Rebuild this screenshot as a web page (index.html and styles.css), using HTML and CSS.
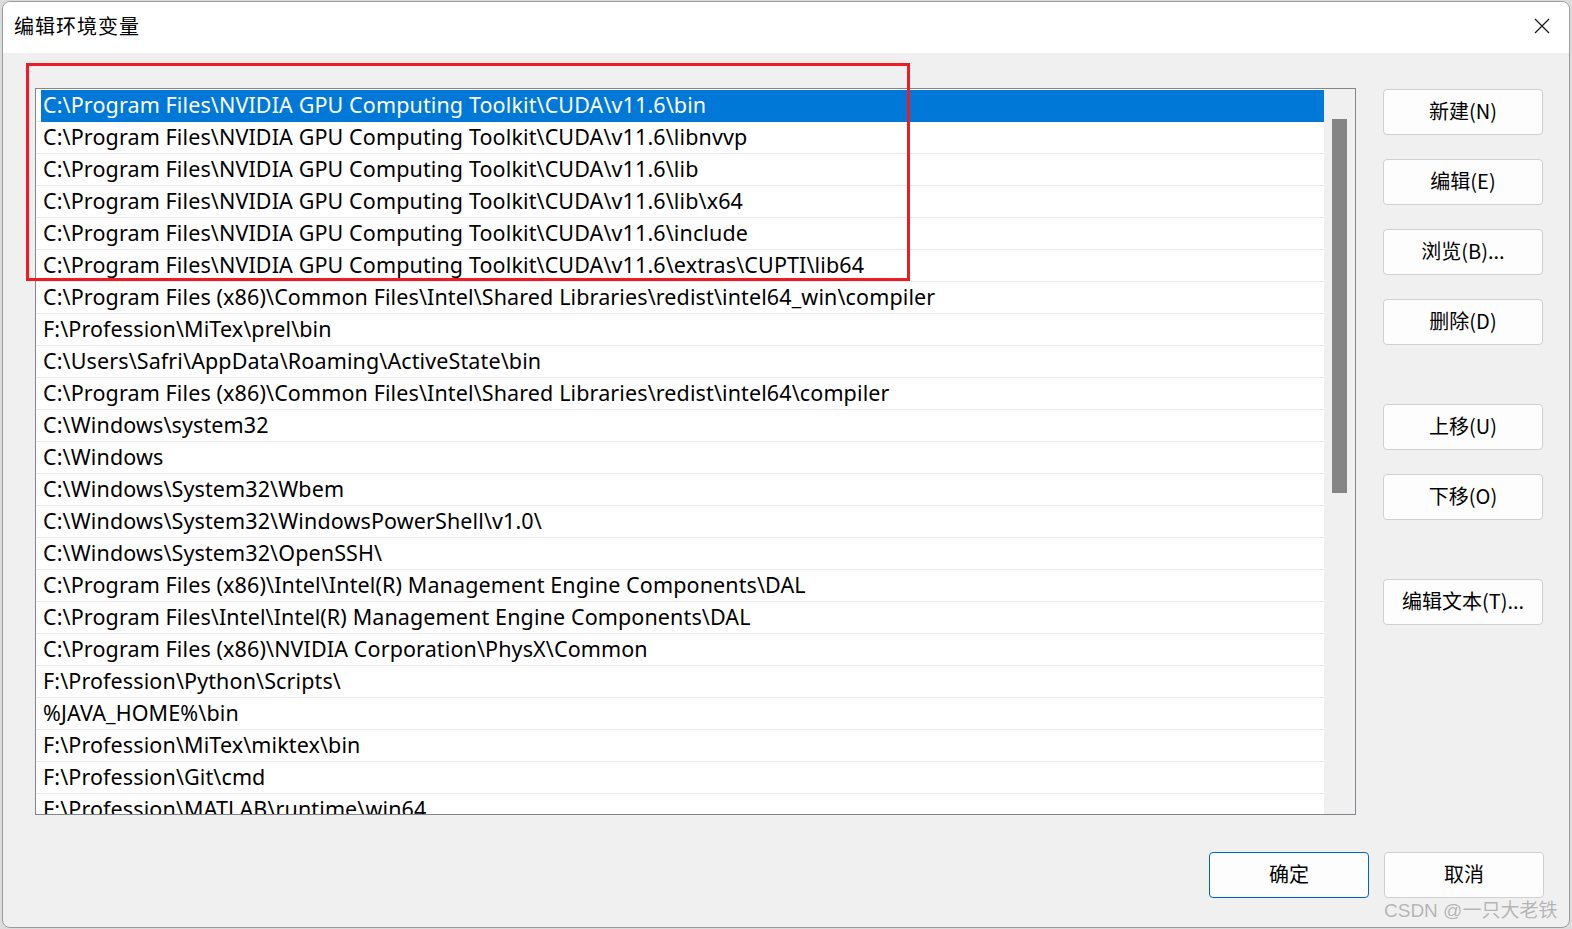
FILE: index.html
```html
<!DOCTYPE html>
<html lang="zh-CN">
<head>
<meta charset="utf-8">
<title>编辑环境变量</title>
<link rel="stylesheet" href="styles.css">
</head>
<body>
<div class="dialog">
  <div class="titlebar">
    <span class="title">编辑环境变量</span>
    <svg class="close" width="16" height="16" viewBox="0 0 16 16"><path d="M1 1 L15 15 M15 1 L1 15" stroke="#1a1a1a" stroke-width="1.3" fill="none"/></svg>
  </div>
  <div class="content">
    <div class="main">
      <div class="listbox">
        <div class="rows">
          <div class="row sel"><span class="cell">C:\Program Files\NVIDIA GPU Computing Toolkit\CUDA\v11.6\bin</span></div>
          <div class="row"><span class="cell">C:\Program Files\NVIDIA GPU Computing Toolkit\CUDA\v11.6\libnvvp</span></div>
          <div class="row"><span class="cell">C:\Program Files\NVIDIA GPU Computing Toolkit\CUDA\v11.6\lib</span></div>
          <div class="row"><span class="cell">C:\Program Files\NVIDIA GPU Computing Toolkit\CUDA\v11.6\lib\x64</span></div>
          <div class="row"><span class="cell">C:\Program Files\NVIDIA GPU Computing Toolkit\CUDA\v11.6\include</span></div>
          <div class="row"><span class="cell">C:\Program Files\NVIDIA GPU Computing Toolkit\CUDA\v11.6\extras\CUPTI\lib64</span></div>
          <div class="row"><span class="cell">C:\Program Files (x86)\Common Files\Intel\Shared Libraries\redist\intel64_win\compiler</span></div>
          <div class="row"><span class="cell">F:\Profession\MiTex\prel\bin</span></div>
          <div class="row"><span class="cell">C:\Users\Safri\AppData\Roaming\ActiveState\bin</span></div>
          <div class="row"><span class="cell">C:\Program Files (x86)\Common Files\Intel\Shared Libraries\redist\intel64\compiler</span></div>
          <div class="row"><span class="cell">C:\Windows\system32</span></div>
          <div class="row"><span class="cell">C:\Windows</span></div>
          <div class="row"><span class="cell">C:\Windows\System32\Wbem</span></div>
          <div class="row"><span class="cell">C:\Windows\System32\WindowsPowerShell\v1.0\</span></div>
          <div class="row"><span class="cell">C:\Windows\System32\OpenSSH\</span></div>
          <div class="row"><span class="cell">C:\Program Files (x86)\Intel\Intel(R) Management Engine Components\DAL</span></div>
          <div class="row"><span class="cell">C:\Program Files\Intel\Intel(R) Management Engine Components\DAL</span></div>
          <div class="row"><span class="cell">C:\Program Files (x86)\NVIDIA Corporation\PhysX\Common</span></div>
          <div class="row"><span class="cell">F:\Profession\Python\Scripts\</span></div>
          <div class="row"><span class="cell">%JAVA_HOME%\bin</span></div>
          <div class="row"><span class="cell">F:\Profession\MiTex\miktex\bin</span></div>
          <div class="row"><span class="cell">F:\Profession\Git\cmd</span></div>
          <div class="row"><span class="cell">F:\Profession\MATLAB\runtime\win64</span></div>
        </div>
        <div class="scrollbar"><div class="thumb"></div></div>
      </div>
      <div class="side">
        <button class="btn">新建(N)</button>
        <button class="btn">编辑(E)</button>
        <button class="btn">浏览(B)...</button>
        <button class="btn">删除(D)</button>
        <button class="btn gap">上移(U)</button>
        <button class="btn">下移(O)</button>
        <button class="btn gap">编辑文本(T)...</button>
      </div>
    </div>
    <div class="footer">
      <button class="btn primary">确定</button>
      <button class="btn">取消</button>
    </div>
  </div>
  <div class="redbox"></div>
  <div class="watermark">CSDN @一只大老铁</div>
</div>
</body>
</html>
```
FILE: styles.css
```css
* { box-sizing: border-box; }
html, body { margin: 0; padding: 0; }
body {
  width: 1572px;
  height: 929px;
  background: #dcdcdc;
  font-family: "Noto Sans", "Noto Sans CJK SC", sans-serif;
  color: #000;
  overflow: hidden;
}
.dialog {
  position: relative;
  margin: 1px 2px 0 2px;
  width: 1568px;
  height: 927px;
  border: 1px solid #9c9c9c;
  border-radius: 8px;
  background: #f0f0f0;
  overflow: hidden;
  display: flex;
  flex-direction: column;
}
.titlebar {
  height: 51px;
  background: #ffffff;
  display: flex;
  align-items: center;
  justify-content: space-between;
  padding: 0 19px 4px 11px;
  flex: none;
}
.title {
  font-family: "Noto Sans CJK SC", sans-serif;
  font-size: 20px;
  letter-spacing: 1px;
}
.close { display: block; }
.content {
  flex: 1;
  display: flex;
  flex-direction: column;
}
.main {
  display: flex;
  gap: 27px;
  padding: 35px 0 0 32px;
}
.listbox {
  width: 1321px;
  height: 727px;
  border: 1px solid #83868c;
  background: #ffffff;
  display: flex;
  overflow: hidden;
}
.rows {
  width: 1288px;
  padding-top: 1px;
  overflow: hidden;
}
.row {
  height: 32px;
  border-bottom: 1px solid #ebebeb;
  display: flex;
}
.cell {
  margin-left: 5px;
  padding-left: 2px;
  flex: 1;
  font-size: 21.5px;
  letter-spacing: 0.12px;
  line-height: 30px;
  white-space: nowrap;
  font-family: "Noto Sans", "Noto Sans CJK SC", sans-serif;
}
.row.sel .cell {
  background: #0078d7;
  color: #ffffff;
  height: 32px;
}
.scrollbar {
  width: 31px;
  background: #f0f0f0;
  padding: 30px 0 0 8px;
}
.thumb {
  width: 15px;
  height: 374px;
  background: #858585;
}
.side {
  width: 160px;
  display: flex;
  flex-direction: column;
  gap: 24px;
  padding-top: 1px;
}
.btn {
  width: 160px;
  height: 46px;
  background: #fdfdfd;
  border: 1px solid #d0d0d0;
  border-radius: 4px;
  font-family: "Noto Sans CJK SC", sans-serif;
  font-size: 20px;
  color: #000;
  padding: 0 0 4px 0;
  display: flex;
  align-items: center;
  justify-content: center;
}
.btn.gap { margin-top: 35px; }
.btn.primary { border-color: #0067c0; }
.footer {
  display: flex;
  justify-content: flex-end;
  gap: 15px;
  padding: 37px 25px 0 0;
}
.redbox {
  position: absolute;
  left: 23px;
  top: 61px;
  width: 884px;
  height: 218px;
  border: 3px solid #ec1c24;
}
.watermark {
  position: absolute;
  left: 1381px;
  top: 893px;
  font-family: "Liberation Sans", "Noto Sans CJK SC", sans-serif;
  font-size: 19px;
  color: #b4b4b4;
  text-shadow: 0 0 1px #ffffff;
  white-space: nowrap;
}
```
